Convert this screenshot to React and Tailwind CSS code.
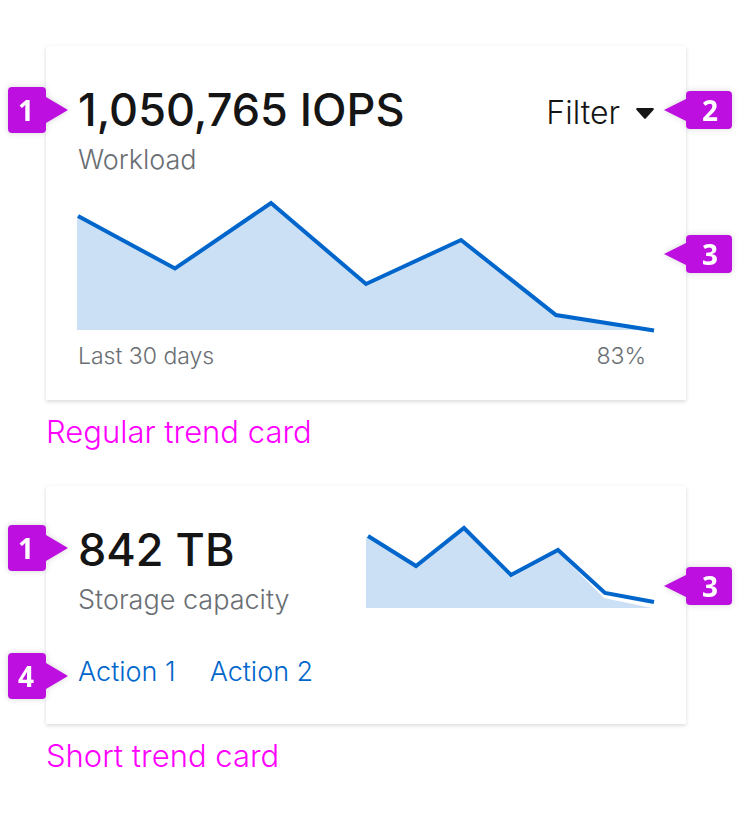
const FONT = "font-['Inter','Liberation_Sans',sans-serif]";

function Callout({ label, side, className }) {
  const left = side === "left";
  return (
    <div
      className={`absolute flex items-center drop-shadow-[0_0_3px_rgba(0,0,0,0.16)] ${
        left ? "right-full -mr-[22px]" : "left-full -ml-[22px] flex-row-reverse"
      } ${className}`}
    >
      <span
        className={`flex items-center justify-center rounded bg-[#bd10e0] font-['Open_Sans','Noto_Sans',sans-serif] text-[28px] leading-8 font-bold text-white ${
          left ? "h-[46px] w-[38px] pr-0.5" : "h-[38px] w-[46px] pl-0.5"
        }`}
      >
        {label}
      </span>
      <svg
        aria-hidden="true"
        viewBox="0 0 22 26"
        preserveAspectRatio="none"
        className={left ? "h-[26px] w-[22px]" : "h-[22px] w-[22px]"}
      >
        <path d={left ? "M0 0 22 13 0 26Z" : "M22 0 0 13 22 26Z"} fill="#bd10e0" />
      </svg>
    </div>
  );
}

function Trend({ viewBox, area, line, title, className }) {
  return (
    <svg role="img" aria-label={title} viewBox={viewBox} className={`block overflow-visible ${className}`}>
      <path d={area} fill="#cce0f5" />
      <polyline points={line} fill="none" stroke="#0066cc" strokeWidth="4" />
    </svg>
  );
}

function Card({ children, className }) {
  return (
    <section
      className={`relative bg-white px-8 shadow-[0_2px_4px_rgba(3,3,3,0.12),0_0_4px_rgba(3,3,3,0.04)] ${className}`}
    >
      {children}
    </section>
  );
}

export default function App() {
  return (
    <main className={`${FONT} bg-white pt-[46px] pr-[58px] pb-[60px] pl-[46px] font-light text-[#151515]`}>
      <Card className="pt-9 pb-7">
        <Callout label="1" side="left" className="top-[41px]" />
        <Callout label="2" side="right" className="top-[45px]" />
        <Callout label="3" side="right" className="top-[189px]" />
        <div className="flex items-center justify-between">
          <h2 className="text-[45px] leading-14 font-medium whitespace-nowrap">1,050,765 IOPS</h2>
          <button type="button" className="flex items-center gap-4 pt-1.5 text-[32px] leading-10">
            Filter
            <svg aria-hidden="true" viewBox="0 0 18 11" className="w-[18px]">
              <path d="M1 0h16q1.500 .6 .4 2L10 10.300q-1 1-2 0L.6 2Q-.5 .6 1 0Z" fill="#151515" />
            </svg>
          </button>
        </div>
        <p className="mt-0.5 text-[27px] leading-10 text-[#6a6e73]">Workload</p>
        <Trend
          title="Workload over the last 30 days"
          viewBox="0 0 576 130"
          className="mt-[22px] w-full"
          area="M-1 128V15L97 66 193 1 288 82 383 38 478 113 572 128Z"
          line="0,14 97,66.500 193,1 288,82 383,38 478,113 576,128.500"
        />
        <div className="mt-2 flex justify-between pr-2 text-[23px] leading-8 text-[#6a6e73]">
          <span>Last 30 days</span>
          <span>83%</span>
        </div>
      </Card>
      <p className="mt-3 text-[31px] leading-10 text-[#ff00ff]">Regular trend card</p>

      <Card className="mt-[34px] pt-9 pb-8">
        <Callout label="1" side="left" className="top-[39px]" />
        <Callout label="4" side="left" className="top-[167px]" />
        <Callout label="3" side="right" className="top-[81px]" />
        <div className="grid grid-cols-2">
          <div>
            <h2 className="text-[45px] leading-14 font-medium whitespace-nowrap">842 TB</h2>
            <p className="mt-0.5 text-[27px] leading-10 whitespace-nowrap text-[#6a6e73]">Storage capacity</p>
          </div>
          <Trend
            title="Storage capacity trend"
            viewBox="0 0 288 83"
            className="mt-1 w-full"
            area="M0 82V11L50 42 98 3 145 52 192 26 238 72 286 82Z"
            line="2,10 50,40 98,2 145,49 192,24 239,67 288,76"
          />
        </div>
        <div className="mt-8 flex gap-[34px] text-[27px] leading-10 text-[#0066cc]">
          <a href="#action-1">Action 1</a>
          <a href="#action-2">Action 2</a>
        </div>
      </Card>
      <p className="mt-3 text-[31px] leading-10 text-[#ff00ff]">Short trend card</p>
    </main>
  );
}
